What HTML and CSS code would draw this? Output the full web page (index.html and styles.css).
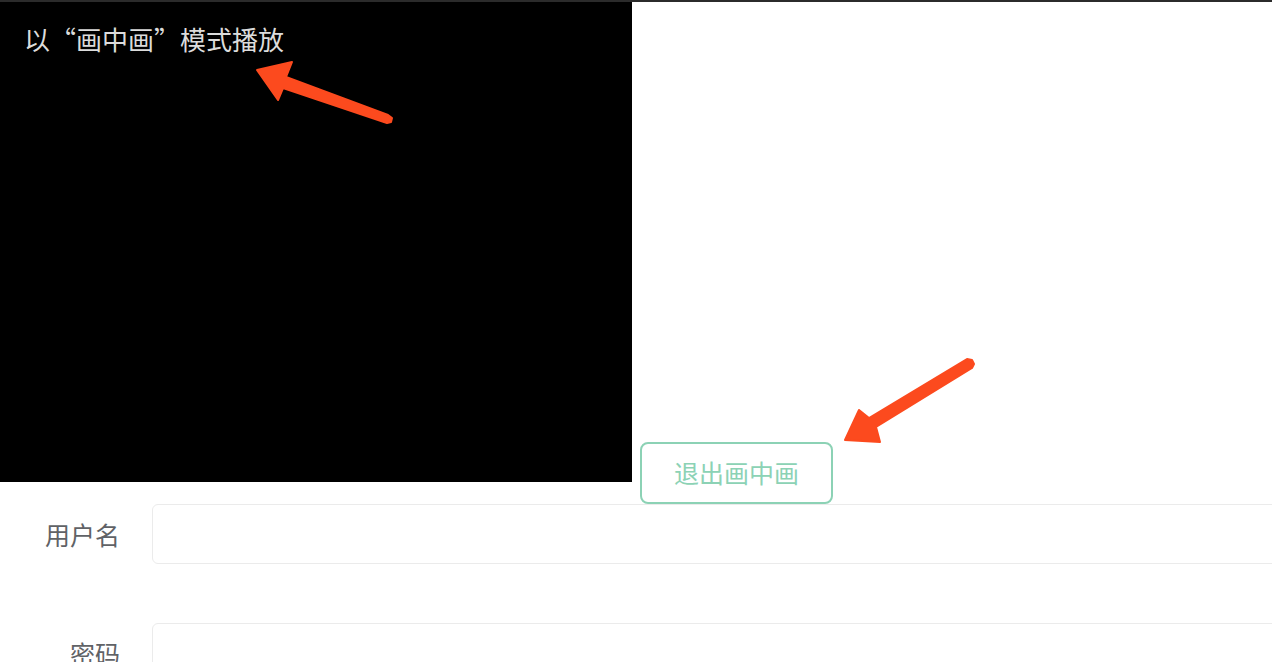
FILE: index.html
```html
<!DOCTYPE html>
<html lang="zh-CN">
  <head>
    <meta charset="UTF-8" />
    <meta name="viewport" content="width=device-width, initial-scale=1.0" />
    <title>画中画</title>
    <link rel="stylesheet" href="styles.css">
  </head>
  <body>
    <div class="page">
      <div class="player-row">
        <div class="video" id="video">
          <div class="video-tip">以“画中画”模式播放</div>
        </div>
        <button class="pip-button" id="pip-button">退出画中画</button>
      </div>

      <form class="form">
        <div class="form-item">
          <label class="form-label" for="username">用户名</label>
          <input class="form-input" id="username" type="text" autocomplete="off" />
        </div>
        <div class="form-item">
          <label class="form-label" for="password">密码</label>
          <input class="form-input" id="password" type="password" />
        </div>
      </form>

      <!-- annotation arrows drawn over the screenshot -->
      <svg class="annotations" width="1272" height="662" viewBox="0 0 1272 662">
        <polygon points="257,70 292,62 286,77 388,115 392,118 391,122 387,123 283,88 278,100" />
        <polygon points="845,440 859,410 869,418 967,359 972,360 974,364 972,368 876,427 880,442" />
      </svg>
    </div>
  </body>
</html>
```

FILE: styles.css
```css
:root {
  --accent: #8cd2b5;
  --label-color: #606266;
  --border-color: #ebebeb;
  --arrow: #fc4a1e;
}

* {
  margin: 0;
  padding: 0;
  box-sizing: border-box;
}

body {
  font-family: "Noto Sans CJK SC", "Noto Sans", sans-serif;
  background-color: white;
  overflow: hidden;
}

.page {
  position: relative;
  border-top: 2px solid #2b2b2b;
}

.player-row {
  font-size: 0;
  line-height: 0;
}

/* overflow hidden puts the inline-block baseline at its bottom edge */
.video {
  display: inline-block;
  vertical-align: baseline;
  overflow: hidden;
  width: 632px;
  height: 480px;
  background-color: #000;
  padding: 20px 24px;
}

.video-tip {
  font-size: 26px;
  line-height: 34px;
  color: #dcdcdc;
}

.pip-button {
  display: inline-block;
  vertical-align: -1px;
  margin-left: 8px;
  width: 193px;
  height: 62px;
  padding: 0 20px;
  border: 2px solid var(--accent);
  border-radius: 8px;
  background-color: white;
  color: var(--accent);
  font-family: inherit;
  font-size: 25px;
  line-height: 55px;
  cursor: pointer;
}

.form-item {
  display: flex;
  align-items: center;
  margin-bottom: 59px;
}

.form-label {
  width: 152px;
  padding-right: 32px;
  text-align: right;
  font-size: 25px;
  color: var(--label-color);
}

.form-input {
  flex-grow: 1;
  margin-right: -20px;
  height: 60px;
  border: 1px solid var(--border-color);
  border-radius: 6px;
  padding: 0 15px;
  font-size: 20px;
  outline: none;
}

.annotations {
  position: absolute;
  top: -2px;
  left: 0;
  pointer-events: none;
}

.annotations polygon {
  fill: var(--arrow);
  stroke: var(--arrow);
  stroke-width: 2;
  stroke-linejoin: round;
}
```
